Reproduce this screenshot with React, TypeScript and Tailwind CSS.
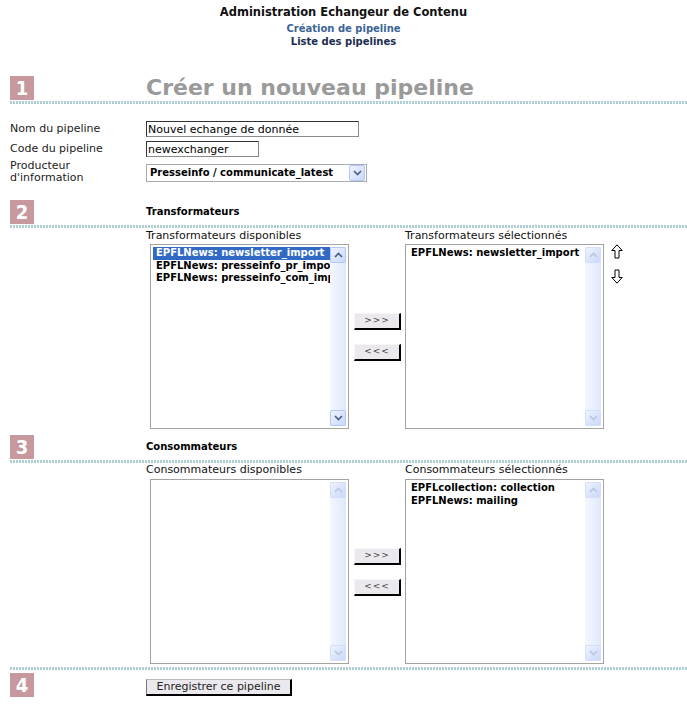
import clsx from "clsx";

type Dir = "up" | "down";

function Badge({ n }: { n: number }) {
  return (
    <div className="flex h-[24px] w-[24px] items-center justify-center bg-[#c7999e] font-['DejaVu_Sans_Condensed',sans-serif] text-[20px] leading-none font-bold text-white">
      {n}
    </div>
  );
}

function Dots({ className }: { className?: string }) {
  return (
    <div
      className={clsx(
        "ml-[10px] h-[3px] bg-[repeating-linear-gradient(90deg,#abcfd3_0px,#abcfd3_2px,transparent_2px,transparent_3px)]",
        className
      )}
    />
  );
}

function ScrollArrow({ dir, disabled }: { dir: Dir; disabled?: boolean }) {
  return (
    <div
      className={clsx(
        "flex h-[16px] w-[16px] items-center justify-center rounded-[2px] border bg-[linear-gradient(135deg,#eef3fe,#c9d9fb)]",
        disabled ? "border-[#d3def7]" : "border-[#b5c8f3]"
      )}
    >
      <svg width="9" height="6" viewBox="0 0 9 6">
        <path
          d={dir === "up" ? "M1 5 L4.5 1.5 L8 5" : "M1 1 L4.5 4.5 L8 1"}
          fill="none"
          stroke={disabled ? "#bac6df" : "#4d6185"}
          strokeWidth="1.7"
        />
      </svg>
    </div>
  );
}

function ListBox({ items, selected, active }: { items: string[]; selected?: number; active?: boolean }) {
  return (
    <div className="flex h-[185px] w-[199px] border border-[#a3a3a3] bg-white p-[2px]">
      <div className="min-w-0 flex-1 overflow-hidden">
        {items.map((item, i) => (
          <div
            key={item}
            className={clsx(
              "px-[3px] text-[10px] leading-[12.5px] font-bold whitespace-nowrap",
              i === selected ? "bg-[#316ac5] text-white" : "text-black"
            )}
          >
            {item}
          </div>
        ))}
      </div>
      <div className="flex w-[16px] flex-col justify-between bg-[linear-gradient(90deg,#f4f7fe,#dfe8fb)]">
        <ScrollArrow dir="up" disabled={!active} />
        <ScrollArrow dir="down" disabled={!active} />
      </div>
    </div>
  );
}

function MoveButton({ label }: { label: string }) {
  return (
    <button className="flex h-[17px] w-[47px] items-center justify-center border border-[#f6f6f6] border-r-2 border-b-2 border-r-black border-b-black bg-[#ece9ee] text-[9px] leading-none tracking-[1px] text-[#444]">
      {label}
    </button>
  );
}

function BlockArrow({ dir }: { dir: Dir }) {
  return (
    <svg width="12" height="15" viewBox="0 0 12 15">
      <path
        d={
          dir === "up"
            ? "M6 0.8 L11.2 6.5 L8 6.5 L8 14 L4 14 L4 6.5 L0.8 6.5 Z"
            : "M6 14.2 L11.2 8.5 L8 8.5 L8 1 L4 1 L4 8.5 L0.8 8.5 Z"
        }
        fill="white"
        stroke="black"
        strokeWidth="1"
      />
    </svg>
  );
}

function Picker({
  leftLabel,
  rightLabel,
  left,
  right,
  leftSelected,
  leftActive,
  withOrder,
  labelGap,
}: {
  leftLabel: string;
  rightLabel: string;
  left: string[];
  right: string[];
  leftSelected?: number;
  leftActive?: boolean;
  withOrder?: boolean;
  labelGap: string;
}) {
  return (
    <div>
      <div className="flex pl-[146px] text-[11px] leading-[12px] text-[#111]">
        <div className="w-[259px]">{leftLabel}</div>
        <div>{rightLabel}</div>
      </div>
      <div className={clsx("flex items-center pl-[150px]", labelGap)}>
        <ListBox items={left} selected={leftSelected} active={leftActive} />
        <div className="ml-[5px] flex flex-col gap-[14px]">
          <MoveButton label=">>>" />
          <MoveButton label="<<<" />
        </div>
        <div className="ml-[4px]">
          <ListBox items={right} />
        </div>
        {withOrder ? (
          <div className="ml-[7px] flex flex-col gap-[10px] self-start">
            <BlockArrow dir="up" />
            <BlockArrow dir="down" />
          </div>
        ) : null}
      </div>
    </div>
  );
}

const inputClass =
  "h-[16px] border border-[#8a8a8a] border-t-[#333] border-l-[#333] bg-white pl-[1px] text-[11px] leading-[14px] text-black outline-none";

export default function App() {
  return (
    <div className="min-h-[707px] bg-white font-['DejaVu_Sans',Verdana,sans-serif] text-black">
      <div className="pt-[5px] text-center">
        <h1 className="text-[11.5px] leading-[14px] font-bold text-[#111]">Administration Echangeur de Contenu</h1>
        <div className="mt-[3px] flex flex-col items-center text-[10px] leading-[13px] font-bold">
          <a className="text-[#3c6496]">Création de pipeline</a>
          <a className="text-[#1b2d4f]">Liste des pipelines</a>
        </div>
      </div>

      {/* 1 */}
      <div className="mt-[28px] grid grid-cols-[136px_1fr] items-end pl-[10px]">
        <Badge n={1} />
        <h2 className="text-[22px] leading-[24px] font-bold text-[#9a9a9a]">Créer un nouveau pipeline</h2>
      </div>
      <Dots className="mt-[1px]" />

      <div className="mt-[17px] grid grid-cols-[136px_1fr] items-center gap-y-[4px] pl-[10px] text-[11px] leading-[12px] text-[#222]">
        <div>Nom du pipeline</div>
        <input readOnly value="Nouvel echange de donnée" className={clsx(inputClass, "w-[213px]")} />
        <div>Code du pipeline</div>
        <input readOnly value="newexchanger" className={clsx(inputClass, "w-[113px]")} />
        <div className="-mt-[1px]">
          Producteur
          <br />
          d'information
        </div>
        <div className="flex h-[18px] w-[221px] items-center justify-between border border-[#a5acb2] bg-white pr-[1px] pl-[3px]">
          <span className="text-[10px] leading-none font-bold text-black">Presseinfo / communicate_latest</span>
          <ScrollArrow dir="down" />
        </div>
      </div>

      {/* 2 */}
      <div className="mt-[16px] grid grid-cols-[136px_1fr] items-center pl-[10px]">
        <Badge n={2} />
        <h3 className="text-[10px] leading-[12px] font-bold">Transformateurs</h3>
      </div>
      <Dots className="mt-[1px]" />
      <div className="mt-[2px]">
        <Picker
          leftLabel="Transformateurs disponibles"
          rightLabel="Transformateurs sélectionnés"
          left={["EPFLNews: newsletter_import", "EPFLNews: presseinfo_pr_import", "EPFLNews: presseinfo_com_import"]}
          right={["EPFLNews: newsletter_import"]}
          leftSelected={0}
          leftActive
          withOrder
          labelGap="mt-[2px]"
        />
      </div>

      {/* 3 */}
      <div className="mt-[6px] grid grid-cols-[136px_1fr] items-center pl-[10px]">
        <Badge n={3} />
        <h3 className="text-[10px] leading-[12px] font-bold">Consommateurs</h3>
      </div>
      <Dots className="mt-[1px]" />
      <div className="mt-[1px]">
        <Picker
          leftLabel="Consommateurs disponibles"
          rightLabel="Consommateurs sélectionnés"
          left={[]}
          right={["EPFLcollection: collection", "EPFLNews: mailing"]}
          labelGap="mt-[3px]"
        />
      </div>

      {/* 4 */}
      <Dots className="mt-[3px]" />
      <div className="mt-[3px] grid grid-cols-[136px_1fr] items-start pl-[10px]">
        <Badge n={4} />
        <div>
          <button className="h-[17px] w-[146px] border border-[#777] border-t-[#bbb] border-r-2 border-b-2 border-r-black border-b-black bg-[#ece9ee] text-[11px] leading-none text-[#222]">
            Enregistrer ce pipeline
          </button>
        </div>
      </div>
    </div>
  );
}
